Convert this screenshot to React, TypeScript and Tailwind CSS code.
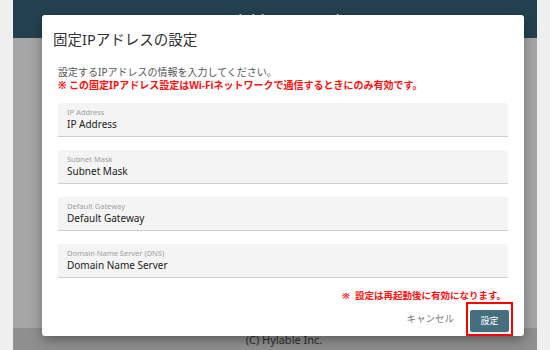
import React from 'react';

const fields = [
    { label: 'IP Address', value: 'IP Address' },
    { label: 'Subnet Mask', value: 'Subnet Mask' },
    { label: 'Default Gateway', value: 'Default Gateway' },
    { label: 'Domain Name Server (DNS)', value: 'Domain Name Server' },
];

const font = { fontFamily: '"Noto Sans", "Noto Sans CJK JP", sans-serif' };

const App = () => {
    return (
        <div className="relative w-[550px] h-[350px] overflow-hidden bg-[#efefef] px-[13px]" style={font}>
            <div className="flex flex-col h-full">
                <header className="h-[38px] bg-[#234150] flex items-center justify-center">
                    <span className="text-[15px] text-[#e6e6e6] tracking-wide ml-[14px]">Hylable Research</span>
                </header>
                <main className="flex-1 bg-[#a6a6a6]"></main>
                <footer className="h-[22px] bg-[#8f8f8f] flex items-center justify-center">
                    <span className="text-[11px] text-[#2d2d2d] mt-[2px] ml-[18px]">(C) Hylable Inc.</span>
                </footer>
            </div>

            {/* dialog */}
            <div className="absolute left-[42px] top-[15px] w-[482px] h-[321px] bg-white rounded-[3px] shadow-[0_4px_12px_rgba(0,0,0,0.35)] flex flex-col">
                <h1 className="text-[14.5px] text-[#333] pl-[11px] pt-[14px] leading-[20px]">固定IPアドレスの設定</h1>
                <div className="px-[16px] pt-[17px]">
                    <p className="text-[10px] leading-[13px] text-[#555]">設定するIPアドレスの情報を入力してください。</p>
                    <p className="text-[10px] leading-[13px] font-bold text-[#ff1010]">※ この固定IPアドレス設定はWi-Fiネットワークで通信するときにのみ有効です。</p>
                    <div className="mt-[11px] flex flex-col gap-[13px]">
                        {fields.map((f) => (
                            <div key={f.label} className="h-[34px] bg-[#f4f4f4] border-b border-[#cfcfcf] rounded-t-[3px] pl-[9px] pt-[4px]">
                                <div className="text-[7.5px] leading-[10px] text-[#a0a0a0]">{f.label}</div>
                                <div className="text-[10px] leading-[15px] text-[#222]">{f.value}</div>
                            </div>
                        ))}
                    </div>
                </div>
                <p className="text-[9.5px] leading-[10px] font-bold text-[#ff1010] text-right pr-[18px] mt-[13px]">※&nbsp;&nbsp;設定は再起動後に有効になります。</p>
                <div className="flex items-center justify-end gap-[10px] pr-[11px] mt-[1px]">
                    <button className="text-[9.5px] text-[#777] px-[2px]">キャンセル</button>
                    <div className="border-2 border-[#ff0000] px-[2px] py-[2px]">
                        <button className="w-[39px] h-[22px] bg-[#456e7e] rounded-[2px] text-[9px] text-white shadow-sm">設定</button>
                    </div>
                </div>
            </div>
        </div>
    );
};

export default App;
